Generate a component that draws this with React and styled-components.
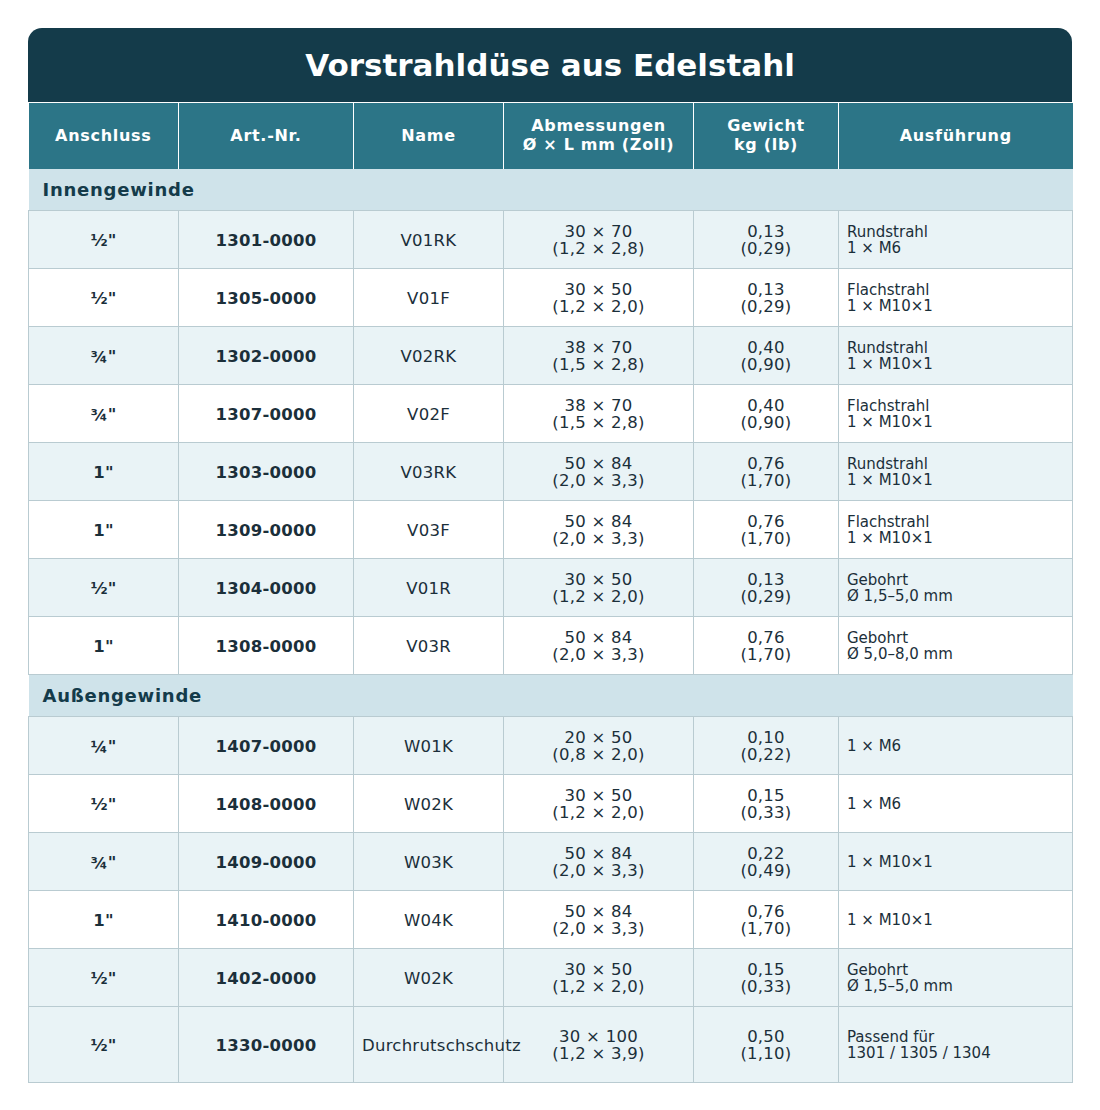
import React from 'react';
import styled, { createGlobalStyle } from 'styled-components';

const GlobalStyle = createGlobalStyle`
  body {
    margin: 0;
    background: #ffffff;
    font-family: "DejaVu Sans", "Liberation Sans", sans-serif;
    color: #1b2f3a;
  }
`;

const Page = styled.div`
  padding: 28px 28px 20px;
`;

const Title = styled.h1`
  margin: 0;
  height: 74px;
  background: #143b4a;
  color: #ffffff;
  border-radius: 14px 14px 0 0;
  display: flex;
  align-items: center;
  justify-content: center;
  font-size: 31px;
  font-weight: bold;
`;

const Table = styled.table`
  width: 1044px;
  border-collapse: collapse;
  table-layout: fixed;
`;

const HeadCell = styled.th`
  height: 66px;
  padding: 0 4px;
  background: #2c7587;
  color: #ffffff;
  font-size: 16px;
  font-weight: bold;
  line-height: 19px;
  letter-spacing: 0.7px;
  text-align: center;
  border-left: 1px solid #ffffff;
  border-top: 1px solid #ffffff;
  &:first-child { border-left: none; }
`;

const HeadText = styled.div`
  margin-top: -2px;
`;

const SectionCell = styled.td`
  height: 41px;
  padding: 0 14px;
  background: #cfe3ea;
  color: #143b4a;
  font-size: 18px;
  font-weight: bold;
  letter-spacing: 0.75px;
  border-bottom: 1px solid #b9cbd1;
`;

const Row = styled.tr`
  background: ${(p) => (p.$shade ? '#e9f3f6' : '#ffffff')};
`;

const Cell = styled.td`
  height: ${(p) => (p.$tall ? '73px' : '55px')};
  padding: 2px 8px 0;
  border: 1px solid #b9cbd1;
  border-top: none;
  text-align: center;
  font-size: 16.5px;
  line-height: 17px;
  letter-spacing: 0.25px;
  font-weight: ${(p) => (p.$bold ? 'bold' : 'normal')};
  color: #1b2f3a;
  white-space: nowrap;
`;

const NoteCell = styled(Cell)`
  text-align: left;
  font-size: 15px;
  line-height: 16px;
  letter-spacing: 0;
`;

const Pair = styled.div`
  margin-top: ${(p) => (p.$note ? '-2px' : '-2px')};
`;

const Line = styled.div``;

const widths = [150, 175, 150, 190, 145, 234];

const heads = [
  ['Anschluss'],
  ['Art.-Nr.'],
  ['Name'],
  ['Abmessungen', 'Ø × L mm (Zoll)'],
  ['Gewicht', 'kg (lb)'],
  ['Ausführung'],
];

const sections = [
  {
    title: 'Innengewinde',
    rows: [
      ['½"', '1301-0000', 'V01RK', '30 × 70', '(1,2 × 2,8)', '0,13', '(0,29)', ['Rundstrahl', '1 × M6'], true],
      ['½"', '1305-0000', 'V01F', '30 × 50', '(1,2 × 2,0)', '0,13', '(0,29)', ['Flachstrahl', '1 × M10×1'], false],
      ['¾"', '1302-0000', 'V02RK', '38 × 70', '(1,5 × 2,8)', '0,40', '(0,90)', ['Rundstrahl', '1 × M10×1'], true],
      ['¾"', '1307-0000', 'V02F', '38 × 70', '(1,5 × 2,8)', '0,40', '(0,90)', ['Flachstrahl', '1 × M10×1'], false],
      ['1"', '1303-0000', 'V03RK', '50 × 84', '(2,0 × 3,3)', '0,76', '(1,70)', ['Rundstrahl', '1 × M10×1'], true],
      ['1"', '1309-0000', 'V03F', '50 × 84', '(2,0 × 3,3)', '0,76', '(1,70)', ['Flachstrahl', '1 × M10×1'], false],
      ['½"', '1304-0000', 'V01R', '30 × 50', '(1,2 × 2,0)', '0,13', '(0,29)', ['Gebohrt', 'Ø 1,5–5,0 mm'], true],
      ['1"', '1308-0000', 'V03R', '50 × 84', '(2,0 × 3,3)', '0,76', '(1,70)', ['Gebohrt', 'Ø 5,0–8,0 mm'], false],
    ],
  },
  {
    title: 'Außengewinde',
    rows: [
      ['¼"', '1407-0000', 'W01K', '20 × 50', '(0,8 × 2,0)', '0,10', '(0,22)', ['1 × M6'], true],
      ['½"', '1408-0000', 'W02K', '30 × 50', '(1,2 × 2,0)', '0,15', '(0,33)', ['1 × M6'], false],
      ['¾"', '1409-0000', 'W03K', '50 × 84', '(2,0 × 3,3)', '0,22', '(0,49)', ['1 × M10×1'], true],
      ['1"', '1410-0000', 'W04K', '50 × 84', '(2,0 × 3,3)', '0,76', '(1,70)', ['1 × M10×1'], false],
      ['½"', '1402-0000', 'W02K', '30 × 50', '(1,2 × 2,0)', '0,15', '(0,33)', ['Gebohrt', 'Ø 1,5–5,0 mm'], true],
      ['½"', '1330-0000', 'Durchrutschschutz', '30 × 100', '(1,2 × 3,9)', '0,50', '(1,10)', ['Passend für', '1301 / 1305 / 1304'], true, true],
    ],
  },
];

export default function App() {
  return (
    <Page>
      <GlobalStyle />
      <Title>Vorstrahldüse aus Edelstahl</Title>
      <Table>
        <colgroup>
          {widths.map((w, i) => (
            <col key={i} style={{ width: w }} />
          ))}
        </colgroup>
        <thead>
          <tr>
            {heads.map((h, i) => (
              <HeadCell key={i}>
                <HeadText>
                  {h.map((l) => (
                    <Line key={l}>{l}</Line>
                  ))}
                </HeadText>
              </HeadCell>
            ))}
          </tr>
        </thead>
        {sections.map((s) => (
          <tbody key={s.title}>
            <tr>
              <SectionCell colSpan={6}>{s.title}</SectionCell>
            </tr>
            {s.rows.map((r, i) => {
              const tall = !!r[9];
              return (
                <Row key={i} $shade={r[8]}>
                  <Cell $bold $tall={tall}>{r[0]}</Cell>
                  <Cell $bold $tall={tall}>{r[1]}</Cell>
                  <Cell $tall={tall}>{r[2]}</Cell>
                  <Cell $tall={tall}>
                    <Pair>
                      <Line>{r[3]}</Line>
                      <Line>{r[4]}</Line>
                    </Pair>
                  </Cell>
                  <Cell $tall={tall}>
                    <Pair>
                      <Line>{r[5]}</Line>
                      <Line>{r[6]}</Line>
                    </Pair>
                  </Cell>
                  <NoteCell $tall={tall}>
                    <Pair $note>
                      {r[7].map((l) => (
                        <Line key={l}>{l}</Line>
                      ))}
                    </Pair>
                  </NoteCell>
                </Row>
              );
            })}
          </tbody>
        ))}
      </Table>
    </Page>
  );
}
